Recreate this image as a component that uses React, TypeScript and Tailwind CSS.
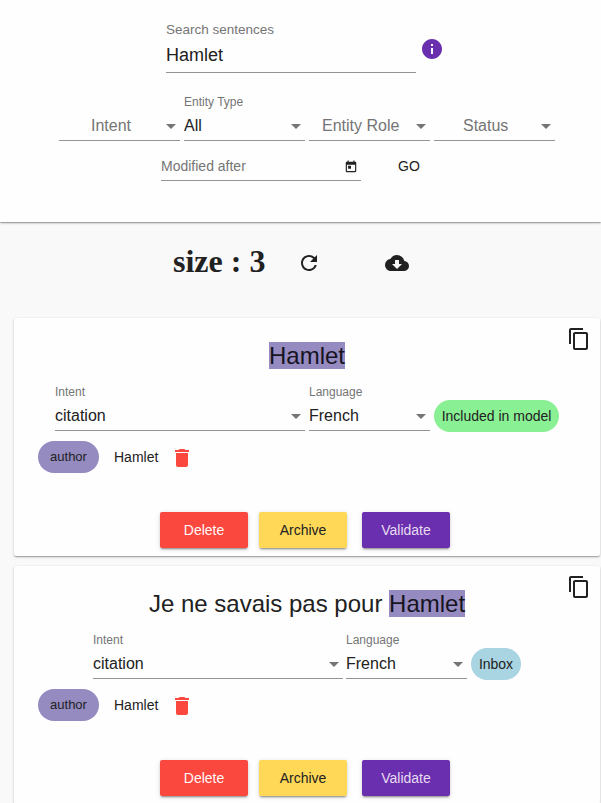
import React from "react";
import {
  MdCloudDownload,
  MdContentCopy,
  MdDelete,
  MdInfo,
  MdRefresh,
  MdToday,
} from "react-icons/md";

const Arrow = () => (
  <span className="mr-1 h-0 w-0 shrink-0 border-x-5 border-t-5 border-x-transparent border-t-[#757575]" />
);

type SelectProps = {
  label?: string;
  value?: string;
  placeholder?: string;
  width: string;
  placeholderClass?: string;
};

function Select({ label, value, placeholder, width, placeholderClass = "" }: SelectProps) {
  return (
    <div className={`flex h-[49px] shrink-0 flex-col border-b border-[#949494] ${width}`}>
      <div className="h-[20px] text-xs leading-5 text-[#757575]">{label}</div>
      <div className="flex h-[28px] items-center justify-between">
        {value ? (
          <span className="text-base leading-7">{value}</span>
        ) : (
          <span className={`text-base leading-7 text-[#757575] ${placeholderClass}`}>{placeholder}</span>
        )}
        <Arrow />
      </div>
    </div>
  );
}

const buttonBase =
  "flex h-9 w-[88px] items-center justify-center rounded-[2px] text-sm shadow-[0_3px_1px_-2px_rgba(0,0,0,0.2),0_2px_2px_0_rgba(0,0,0,0.14),0_1px_5px_0_rgba(0,0,0,0.12)]";

type CardProps = {
  before?: string;
  status: string;
  statusClass: string;
  fieldsClass: string;
  gapClass: string;
};

function SentenceCard({ before = "", status, statusClass, fieldsClass, gapClass }: CardProps) {
  return (
    <article className="relative ml-[14px] flex h-[238px] w-[586px] shrink-0 flex-col rounded-[2px] bg-[#fefefe] shadow-[0_1px_3px_0_rgba(0,0,0,0.2),0_1px_1px_0_rgba(0,0,0,0.14),0_2px_1px_-1px_rgba(0,0,0,0.12)]">
      <button className="absolute top-[9px] right-[9px]" aria-label="Copy">
        <MdContentCopy size={24} />
      </button>
      <h2 className="mt-6 h-[27px] text-center text-2xl leading-[27px] whitespace-pre">
        {before}
        <span className="bg-[#958bc0] text-[#17141f]">Hamlet</span>
      </h2>
      <div className={`mt-[13px] flex ${fieldsClass}`}>
        <Select label="Intent" value="citation" width="w-[250px]" />
        <div className={`flex ${gapClass}`}>
          <Select label="Language" value="French" width="w-[121px]" />
        </div>
        <span
          className={`mt-[18px] ml-1 flex h-8 items-center justify-center rounded-full text-sm ${statusClass}`}
        >
          {status}
        </span>
      </div>
      <div className="mt-[9px] ml-6 flex h-8 items-center">
        <span className="flex h-8 w-[61px] items-center justify-center rounded-full bg-[#958bc0] text-[13px]">
          author
        </span>
        <span className="ml-[15px] text-sm">Hamlet</span>
        <MdDelete size={24} className="mt-0.5 ml-[12px] text-[#fb483f]" />
      </div>
      <div className="mt-[39px] ml-[146px] flex">
        <button className={`${buttonBase} bg-[#fb483f] text-[#fffafa]`}>Delete</button>
        <button className={`${buttonBase} ml-[11px] bg-[#ffd858]`}>Archive</button>
        <button className={`${buttonBase} ml-[15px] bg-[#6a2fae] text-[#e7dcf2]`}>Validate</button>
      </div>
    </article>
  );
}

export default function App() {
  return (
    <div className="flex h-[803px] w-[601px] flex-col overflow-hidden bg-[#f9f9f9] font-['Liberation_Sans',Arial,sans-serif] text-[#212121]">
      <section className="flex h-[222px] shrink-0 flex-col bg-[#fefefe] shadow-[0_1px_3px_0_rgba(0,0,0,0.2),0_1px_1px_0_rgba(0,0,0,0.14),0_2px_1px_-1px_rgba(0,0,0,0.12)]">
        <div className="mt-[19px] ml-[166px] flex">
          <div className="flex h-[54px] w-[250px] flex-col border-b border-[#949494]">
            <label className="h-[22px] text-[13.5px] leading-[21px] text-[#757575]">Search sentences</label>
            <span className="text-lg leading-7">Hamlet</span>
          </div>
          <MdInfo size={24} className="mt-[18px] ml-1 text-[#6a2fae]" />
        </div>
        <div className="mt-[19px] ml-[59px] flex gap-1">
          <Select placeholder="Intent" width="w-[121px]" placeholderClass="ml-8" />
          <Select label="Entity Type" value="All" width="w-[121px]" />
          <Select placeholder="Entity Role" width="w-[121px]" placeholderClass="ml-[13px]" />
          <Select placeholder="Status" width="w-[121px]" placeholderClass="ml-[29px]" />
        </div>
        <div className="mt-[11px] ml-[161px] flex h-[29px]">
          <div className="flex w-[200px] items-center justify-between border-b border-[#949494]">
            <span className="text-sm text-[#757575]">Modified after</span>
            <MdToday size={14} className="mt-0.5 mr-[3px]" />
          </div>
          <button className="mb-px ml-[37px] text-sm">GO</button>
        </div>
      </section>
      <div className="flex h-[96px] shrink-0 pl-[173px]">
        <h1 className="mt-[21px] w-[124px] font-['Liberation_Serif','Times_New_Roman',serif] text-[32px] leading-[37px] font-bold">
          size : 3
        </h1>
        <MdRefresh size={24} className="mt-[29px]" />
        <MdCloudDownload size={24} className="mt-[29px] ml-16" />
      </div>
      <SentenceCard
        status="Included in model"
        statusClass="bg-[#8af094] w-[125px]"
        fieldsClass="ml-[41px]"
        gapClass="ml-1"
      />
      <div className="h-[10px] shrink-0" />
      <SentenceCard
        before="Je ne savais pas pour "
        status="Inbox"
        statusClass="bg-[#a9d4e2] w-[50px]"
        fieldsClass="ml-[79px]"
        gapClass="ml-[3px]"
      />
    </div>
  );
}
